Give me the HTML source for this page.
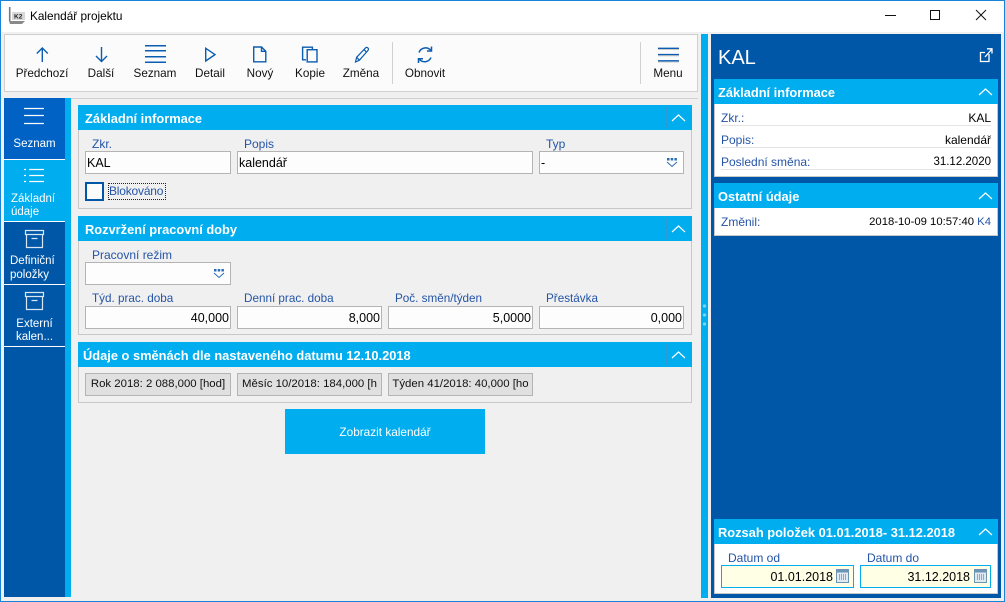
<!DOCTYPE html>
<html lang="cs"><head><meta charset="utf-8"><title>Kalendář projektu</title>
<style>
html,body{margin:0;padding:0}
body{width:1005px;height:602px;overflow:hidden;position:relative;background:#f0f0f0;font:12px/16px "Liberation Sans",sans-serif;color:#000}
div{position:absolute;box-sizing:border-box}
.t{white-space:nowrap}
.l{color:#2454a6;white-space:nowrap}
.w{color:#fff;white-space:nowrap;text-align:center}
.c{text-align:center;white-space:nowrap;color:#111;font-size:11.7px}
.h{background:#00adef;color:#fff;font-weight:bold;font-size:12.85px;line-height:27px;padding-left:7px;height:25px;white-space:nowrap}
.b{border:1px solid #c8c8c8;border-top:0}
.i{background:#fdfdfd;border:1px solid #b4b4b4;height:23px;line-height:22px;padding:0 1px;white-space:nowrap;font-size:12.5px}
.r{text-align:right}
.p{background:#e0e0e0;border:1px solid #b4b4b4;height:23px;line-height:21px;white-space:nowrap;overflow:hidden;text-align:center;color:#111;font-size:11.4px}
.u{height:1px;background:#e4e4e4;left:721px;width:270px}
svg{position:absolute;left:0;top:0;z-index:5}
</style></head><body>
<div style="left:0;top:0;width:1005px;height:32px;background:#fff"></div>
<div style="left:0;top:0;width:1005px;height:1px;background:#1883d7"></div>
<div style="left:0;top:0;width:1px;height:602px;background:#1883d7"></div>
<div style="left:1004px;top:0;width:1px;height:602px;background:#1883d7"></div>
<div style="left:0;top:601px;width:1005px;height:1px;background:#1883d7"></div>
<div class="t" style="left:30px;top:8px;font-size:11.8px">Kalendář projektu</div>

<div style="left:4px;top:34px;width:694px;height:58px;background:#fbfbfb;border:1px solid #cfcfcf"></div>
<div class="c" style="left:2px;width:80px;top:66px">Předchozí</div>
<div class="c" style="left:71px;width:60px;top:66px">Další</div>
<div class="c" style="left:125px;width:60px;top:66px">Seznam</div>
<div class="c" style="left:180px;width:60px;top:66px">Detail</div>
<div class="c" style="left:230px;width:60px;top:66px">Nový</div>
<div class="c" style="left:280px;width:60px;top:66px">Kopie</div>
<div class="c" style="left:331px;width:60px;top:66px">Změna</div>
<div class="c" style="left:395px;width:60px;top:66px">Obnovit</div>
<div class="c" style="left:638px;width:60px;top:66px">Menu</div>
<div style="left:392px;top:42px;width:1px;height:42px;background:#d0d0d0"></div>
<div style="left:640px;top:42px;width:1px;height:42px;background:#d0d0d0"></div>

<!-- left nav -->
<div style="left:4px;top:98px;width:61px;height:499px;background:#0057a8"></div>
<div style="left:65px;top:98px;width:6px;height:499px;background:#00adef"></div>
<div style="left:71px;top:98px;width:627px;height:1px;background:#d0d0d0"></div>
<div style="left:4px;top:98px;width:61px;height:61px;background:#0062c4"></div>
<div style="left:4px;top:160px;width:61px;height:61px;background:#00adef"></div>
<div style="left:4px;top:159px;width:61px;height:1px;background:#fff"></div>
<div style="left:4px;top:221px;width:61px;height:1px;background:#fff"></div>
<div style="left:4px;top:284px;width:61px;height:1px;background:#fff"></div>
<div style="left:4px;top:346px;width:61px;height:1px;background:#fff"></div>
<div class="w" style="left:4px;width:61px;top:136px;font-size:11.5px">Seznam</div>
<div class="w" style="left:4px;width:61px;top:193px;font-size:11.5px;line-height:13px;text-align:left;padding-left:7px">Základní<br>údaje</div>
<div class="w" style="left:4px;width:61px;top:254px;font-size:11.5px;line-height:14px;text-align:left;padding-left:6px">Definiční<br>položky</div>
<div class="w" style="left:4px;width:61px;top:318px;font-size:11.5px;line-height:13px">Externí<br>kalen...</div>

<!-- section 1 -->
<div class="b" style="left:78px;top:105px;width:614px;height:104px"></div>
<div class="h" style="left:78px;top:105px;width:614px">Základní informace</div>
<div class="l" style="left:92px;top:136px">Zkr.</div>
<div class="l" style="left:244px;top:136px">Popis</div>
<div class="l" style="left:546px;top:136px">Typ</div>
<div class="i" style="left:85px;top:151px;width:146px">KAL</div>
<div class="i" style="left:237px;top:151px;width:296px">kalendář</div>
<div class="i" style="left:539px;top:151px;width:145px">-</div>
<div style="left:85px;top:182px;width:19px;height:19px;border:2px solid #0057a8;background:#fbfbfb"></div>
<div class="l" style="left:108px;top:183px;width:58px;height:17px;border:1px dotted #222;line-height:15px;font-size:12px;letter-spacing:-.2px">Blokováno</div>

<!-- section 2 -->
<div class="b" style="left:78px;top:216px;width:614px;height:119px"></div>
<div class="h" style="left:78px;top:216px;width:614px">Rozvržení pracovní doby</div>
<div class="l" style="left:92px;top:247px">Pracovní režim</div>
<div class="i" style="left:85px;top:262px;width:146px"></div>
<div class="l" style="left:92px;top:291px;font-size:11.7px">Týd. prac. doba</div>
<div class="l" style="left:244px;top:291px;font-size:11.7px">Denní prac. doba</div>
<div class="l" style="left:395px;top:291px;font-size:11.7px">Poč. směn/týden</div>
<div class="l" style="left:546px;top:291px;font-size:11.7px">Přestávka</div>
<div class="i r" style="left:85px;top:306px;width:146px">40,000</div>
<div class="i r" style="left:237px;top:306px;width:145px">8,000</div>
<div class="i r" style="left:388px;top:306px;width:145px">5,0000</div>
<div class="i r" style="left:539px;top:306px;width:145px">0,000</div>

<!-- section 3 -->
<div class="b" style="left:78px;top:342px;width:614px;height:61px"></div>
<div class="h" style="left:78px;top:342px;width:614px;padding-left:5px">Údaje o směnách dle nastaveného datumu 12.10.2018</div>
<div class="p" style="left:85px;top:373px;width:146px">Rok 2018: 2 088,000 [hod]</div>
<div class="p" style="left:237px;top:373px;width:145px">Měsíc 10/2018: 184,000 [h</div>
<div class="p" style="left:388px;top:373px;width:145px">Týden 41/2018: 40,000 [ho</div>
<div class="w" style="left:285px;top:409px;width:200px;height:45px;background:#00adef;line-height:46px;font-size:11.8px">Zobrazit kalendář</div>

<!-- right side -->
<div style="left:701px;top:34px;width:7px;height:564px;background:#00adef"></div>
<div style="left:711px;top:34px;width:290px;height:564px;background:#0057a8"></div>
<div class="t" style="left:718px;top:45px;font-size:20px;line-height:26px;color:#fff">KAL</div>

<div style="left:714px;top:79px;width:284px;height:98px;background:#fff;border:1px solid #c8c8c8"></div>
<div class="h" style="left:714px;top:79px;width:284px;padding-left:4px">Základní informace</div>
<div class="l" style="left:721px;top:110px">Zkr.:</div><div class="t" style="right:14px;top:110px">KAL</div><div class="u" style="top:125px"></div>
<div class="l" style="left:721px;top:132px">Popis:</div><div class="t" style="right:14px;top:132px">kalendář</div><div class="u" style="top:147px"></div>
<div class="l" style="left:721px;top:154px">Poslední směna:</div><div class="t" style="right:14px;top:154px;font-size:11.5px">31.12.2020</div><div class="u" style="top:169px"></div>

<div style="left:714px;top:183px;width:284px;height:53px;background:#fff;border:1px solid #c8c8c8"></div>
<div class="h" style="left:714px;top:183px;width:284px;padding-left:4px">Ostatní údaje</div>
<div class="l" style="left:721px;top:214px">Změnil:</div>
<div class="t" style="right:14px;top:214px;font-size:11.3px">2018-10-09 10:57:40 <span style="color:#2454a6">K4</span></div>

<div style="left:714px;top:519px;width:284px;height:75px;background:#fff;border:1px solid #c8c8c8"></div>
<div class="h" style="left:714px;top:519px;width:284px;padding-left:4px">Rozsah položek 01.01.2018- 31.12.2018</div>
<div class="l" style="left:728px;top:550px">Datum od</div>
<div class="l" style="left:867px;top:550px">Datum do</div>
<div class="i r" style="left:721px;top:565px;width:133px;border:1px solid #00adef;background:#ffffe6;padding-right:20px">01.01.2018</div>
<div class="i r" style="left:860px;top:565px;width:131px;border:1px solid #00adef;background:#ffffe6;padding-right:20px">31.12.2018</div>

<svg width="1005" height="602" viewBox="0 0 1005 602" fill="none">
<!-- app icon -->
<rect x="12" y="12" width="13" height="8" fill="#d8d8d8"/>
<path d="M9.7 7V21" stroke="#7a7a7a" stroke-width="1.6"/>
<path d="M9 21H25L22 24H10Z" fill="#8a8a8a"/>
<text x="14" y="18.5" font-family="Liberation Sans" font-size="6.5" font-weight="bold" fill="#222">K2</text>
<!-- window controls -->
<path d="M885 15.5H896" stroke="#111"/>
<rect x="930.5" y="10.5" width="9" height="9" stroke="#111"/>
<path d="M976 10L986 20M986 10L976 20" stroke="#111"/>
<!-- toolbar icons -->
<g stroke="#0a5db0" stroke-width="1.4">
<path d="M42.3 48V62M36.8 53.5L42.3 48L47.8 53.5"/>
<path d="M101.5 47V61.5M96 56L101.5 61.5L107 56"/>
<path d="M145 45.8H166M145 50.8H166M145 56.8H166M145 62.2H166" stroke-width="1.5"/>
<path d="M205.7 48.3V61L215 54.6Z"/>
<path d="M253.7 47H261.5L265.8 51.3V61.8H253.7ZM261.5 47V51.3H265.8"/>
<path d="M306 59.8H302.6V47.2H312.4V49.2"/>
<rect x="307.2" y="49.7" width="9.8" height="12.2"/>
<path d="M355.5 62L356.6 57.3L365.6 47.8Q366.8 46.8 368 48Q369 49.3 368 50.4L359.4 60.2ZM356.6 57.3L359.4 60.2M364 49.6L366.6 52.3" stroke-width="1.2"/>
<path d="M419 52.5A7 7 0 0 1 431 50.5" stroke-width="1.5"/><path d="M431.5 46.5V51H427" stroke-width="1.5"/>
<path d="M431 57.5A7 7 0 0 1 419.5 59.5" stroke-width="1.5"/><path d="M418.5 63V58.8H423" stroke-width="1.5"/>
<path d="M658 48.3H679M658 54.6H679M658 60.8H679" stroke-width="1.4"/>
</g>
<path d="M658 49.5H679M658 55.8H679M658 62H679" stroke="#bbb" stroke-width=".8"/>
<!-- nav icons -->
<g stroke="#fff" stroke-width="1.2">
<path d="M24 108.5H44M24 115.5H44M24 123.5H44"/>
<path d="M29 169.5H44M29 175.5H44M29 181.5H44"/>
<path d="M24 169.5H26M24 175.5H26M24 181.5H26"/>
</g>
<g stroke="#d8e6f2" stroke-width="1.2">
<path d="M25.5 230.5H43.5V234.5H25.5ZM26.5 234.5V247.5H42.5V234.5M31.5 238.5H37.5"/>
<path d="M25.5 292.5H43.5V296.5H25.5ZM26.5 296.5V309.5H42.5V296.5M31.5 300.5H37.5"/>
</g>
<!-- chevrons and separators -->
<g stroke="#2d9ad6"><path d="M666.5 107V128M666.5 218V239M666.5 344V365M973.5 81V102M973.5 185V206M973.5 521V542"/></g>
<g stroke="#fff" stroke-width="1.2">
<path d="M672 121L678.5 115L685 121M672 232L678.5 226L685 232M672 358L678.5 352L685 358"/>
<path d="M979 95L985.5 89L992 95M979 199L985.5 193L992 199M979 535L985.5 529L992 535"/>
<path d="M989 54V61.5H980.5V52.5H985M985 57L991.5 49.5M987 48.8H992V53.5" stroke-width="1.3"/>
</g>
<!-- dropdown icons -->
<path d="M667 158h2.5v2.5H667zM670.7 158h2.5v2.5h-2.5zM674.4 158h2.5v2.5h-2.5z" fill="#2a6cb5"/>
<path d="M667 162L672 166.5L677 162" stroke="#2a6cb5"/>
<path d="M214 269h2.5v2.5H214zM217.7 269h2.5v2.5h-2.5zM221.4 269h2.5v2.5h-2.5z" fill="#2a6cb5"/>
<path d="M214 273L219 277.5L224 273" stroke="#2a6cb5"/>
<!-- grip -->
<circle cx="704.5" cy="306" r="1.6" fill="#7fd4f5"/><circle cx="704.5" cy="315" r="1.6" fill="#7fd4f5"/><circle cx="704.5" cy="324" r="1.6" fill="#7fd4f5"/>
<!-- calendars -->
<rect x="836.5" y="569.5" width="12" height="13" fill="#dfe9f2" stroke="#6d93b5"/><rect x="836.5" y="569.5" width="12" height="3" fill="#6d93b5"/>
<path d="M839 575h7M839 577h7M839 579h7" stroke="#46688a" stroke-dasharray="1 1"/>
<rect x="974.5" y="569.5" width="12" height="13" fill="#dfe9f2" stroke="#6d93b5"/><rect x="974.5" y="569.5" width="12" height="3" fill="#6d93b5"/>
<path d="M977 575h7M977 577h7M977 579h7" stroke="#46688a" stroke-dasharray="1 1"/>
</svg>
</body></html>
